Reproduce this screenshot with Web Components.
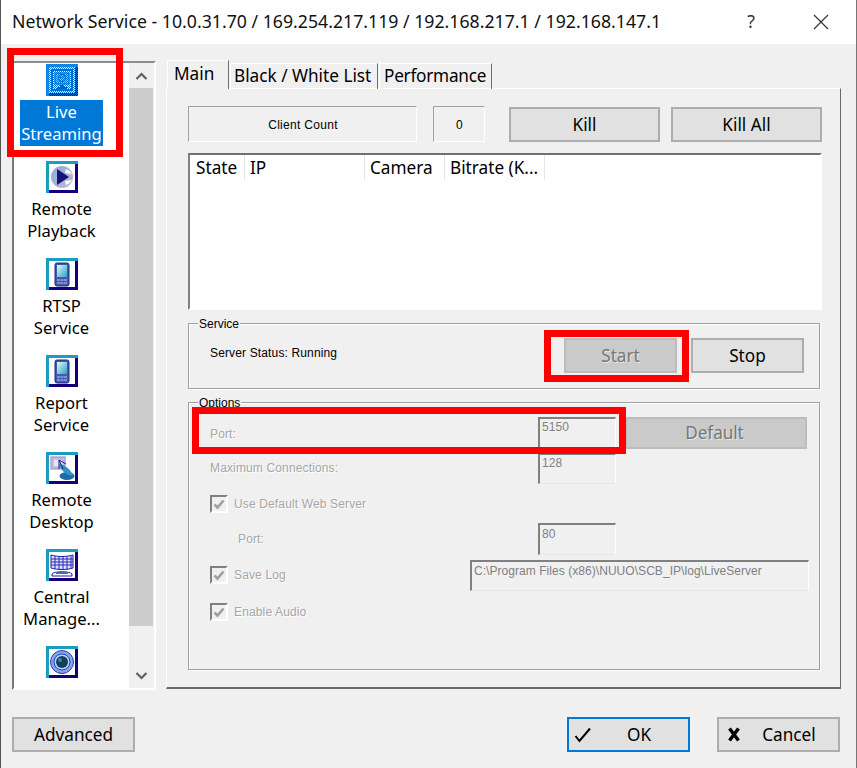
<!DOCTYPE html>
<html><head><meta charset="utf-8"><title>Network Service</title>
<style>html,body{margin:0;padding:0;background:#f0f0f0}</style></head>
<body>
<net-dialog></net-dialog>
<script>
const UI='"Noto Sans","Open Sans",sans-serif';
const SMALL='"Liberation Sans",Arial,sans-serif';
function def(name,css,html){
  customElements.define(name,class extends HTMLElement{
    constructor(){super();const r=this.attachShadow({mode:'open'});
      r.innerHTML='<style>'+css+'</style>'+(typeof html==='function'?html(this):html);}
  });
}
const ICONS={
 live:`<rect x="5" y="5" width="22" height="22" fill="#1c5cb0"/><rect x="7" y="7" width="18" height="18" fill="#fff"/><rect x="9" y="9" width="14" height="11" fill="#9db8ea" stroke="#123a9a"/><circle cx="16" cy="14" r="3.6" fill="none" stroke="#1c3fa8"/><circle cx="14.7" cy="13.2" r=".7" fill="#1c3fa8"/><circle cx="17.3" cy="13.2" r=".7" fill="#1c3fa8"/><path d="M14 21h4v2h3v2H11v-2h3z" fill="#123a9a"/>`,
 play:`<circle cx="16" cy="16" r="11" fill="url(#p)"/><path d="M11 8l12 8-12 8z" fill="#14147a"/><path d="M20 8a10 10 0 0 1 6 5l-7-1z" fill="#fff"/><path d="M20 24a10 10 0 0 0 6-5l-7 1z" fill="#fff"/>`,
 phone:`<rect x="9" y="5" width="14" height="23" rx="2" fill="#3a5fa8" stroke="#1d2a84"/><rect x="11" y="7" width="10" height="12" fill="url(#s)"/><g fill="#8f86d6"><rect x="11" y="21" width="3" height="2"/><rect x="14.5" y="21" width="3" height="2"/><rect x="18" y="21" width="3" height="2"/><rect x="11" y="24" width="3" height="2"/><rect x="14.5" y="24" width="3" height="2"/><rect x="18" y="24" width="3" height="2"/></g>`,
 desk:`<rect x="5" y="5" width="14" height="12" fill="#d4cdea" stroke="#8a80bc"/><rect x="7" y="7" width="10" height="8" fill="#e9e6f5" stroke="#a79fd0"/><ellipse cx="21" cy="24" rx="7.5" ry="4" fill="#1a6ca6"/><path d="M13 12c2 7 7 11 14 12-1-5-7-11-14-12z" fill="#2f93c8"/><path d="M13 8l4 9M13 8l7 4M13 8v9" stroke="#1a1a8a" fill="none"/>`,
 cms:`<path d="M5 6c7 2 15 2 22 0v13c-7 2-15 2-22 0z" fill="#dfe3f8" stroke="#1d1d96"/><path d="M5 10h22M5 13h22M5 16h22M9 7v13M13 7v14M17 7v14M21 7v14M25 7v13" stroke="#2a2ac0" stroke-width="1"/><path d="M6 25c2-3 18-3 20 0v2H6z" fill="#fff" stroke="#1d1d96"/><path d="M10 24h12" stroke="#4a6ac0" stroke-width="2"/>`,
 lens:`<circle cx="16" cy="16" r="11.5" fill="#7fa5e8" stroke="#2b3fb4"/><circle cx="16" cy="16" r="8" fill="#b9d4f6" stroke="#2b3fb4"/><circle cx="16" cy="16" r="6" fill="#123f5e"/><circle cx="14" cy="14" r="2" fill="#3b86a6"/>`
};
def('app-icon',`:host{display:block;width:32px;height:32px}svg{display:block}`,h=>{
 const k=h.getAttribute('kind'),sel=h.hasAttribute('selected');
 return `<svg width="32" height="32" viewBox="0 0 32 32"><defs>
 <linearGradient id="p" x1="0" y1="0" x2="1" y2="1"><stop offset="0" stop-color="#8fa9d8"/><stop offset="1" stop-color="#c4b8d8"/></linearGradient>
 <linearGradient id="s" x1="0" y1="0" x2="1" y2="1"><stop offset="0" stop-color="#e4f8fb"/><stop offset="1" stop-color="#2aa3c8"/></linearGradient>
 <pattern id="d" width="2" height="2" patternUnits="userSpaceOnUse"><rect width="1" height="1" fill="#0078d7"/><rect x="1" y="1" width="1" height="1" fill="#0078d7"/></pattern></defs>
 <rect width="32" height="32" fill="#14007a"/><path d="M0 0h32v3H3v29H0z" fill="#1c9cc0"/><rect x="3" y="3" width="26" height="26" fill="#fff"/>${ICONS[k]}
 ${sel?'<rect width="32" height="32" fill="url(#d)"/>':''}</svg>`});

def('nav-item',`:host{display:flex;flex-direction:column;align-items:center;height:97px;flex:none}
 .t{margin-top:4px;font:16.6px/22px ${UI};text-align:center;padding:1px 1px;color:#000;white-space:pre-line}
 :host([selected]) .t{background:#0078d7;color:#fff}`,
 h=>`<app-icon kind="${h.getAttribute('kind')}" ${h.hasAttribute('selected')?'selected':''}></app-icon><div class="t"><slot></slot></div>`);

def('nav-list',`:host{display:flex;width:140px;height:625px;border-style:solid;border-width:2px;border-color:#8c8c8c #fff #fff #7a7a7a;background:#fff;overflow:hidden;margin:0}
 .items{width:95px;padding:1px 20px 0 0;overflow:hidden;display:flex;flex-direction:column}
 .bar{width:25px;background:#f0f0f0;display:flex;flex-direction:column;align-items:stretch}
 .btn{height:25px;display:flex;align-items:center;justify-content:center;padding-right:1px}
 .thumb{height:538px;background:#cdcdcd;margin-right:1px}
 .rest{flex:1;display:flex;align-items:flex-end;justify-content:center;padding:0 1px 8px 0}
 svg{display:block}`,
 `<div class="items"><slot></slot></div><div class="bar"><div class="btn"><svg width="13" height="8"><path d="M1.5 7L6.5 2l5 5" fill="none" stroke="#606060" stroke-width="2.2"/></svg></div><div class="thumb"></div><div class="rest"><svg width="13" height="8"><path d="M1.5 1l5 5 5-5" fill="none" stroke="#606060" stroke-width="2.2"/></svg></div></div>`);

def('win-button',`:host{display:flex;align-items:center;justify-content:center;box-sizing:border-box;height:35px;background:#e1e1e1;border:2px solid #adadad;font:17.2px/1 ${UI};color:#000;flex:none;position:relative}
 :host([disabled]){background:#cacaca;border-color:#bcbcbc;color:#777;text-shadow:1px 1px 0 rgba(255,255,255,.55)}
 :host([primary]){border-color:#0078d7}
 :host([shift]){padding-left:21px}`,`<slot name="icon"></slot><slot></slot>`);

def('sunken-box',`:host{display:flex;align-items:center;justify-content:center;box-sizing:border-box;height:36px;padding:1px 0 0 1px;border:1px solid;border-color:#a0a0a0 #fff #fff #a0a0a0;font:12px/1 ${SMALL};letter-spacing:.3px;color:#000;flex:none}`,`<slot></slot>`);

def('report-list',`:host{display:block;box-sizing:border-box;width:634px;height:157px;background:#fff;border:2px solid;border-color:#707070 #fff #fff #808080;margin-top:11px}
 .h{display:flex;height:25px;font:17.2px/25px ${UI};color:#000}
 .c{box-sizing:border-box;border-right:1px solid #e5e5e5;padding-left:5px;white-space:nowrap;overflow:hidden}`,
 `<div class="h"><div class="c" style="width:55px;padding-left:6px">State</div><div class="c" style="width:120px">IP</div><div class="c" style="width:80px">Camera</div><div class="c" style="width:100px">Bitrate (K...</div></div>`);

def('group-box',`:host{display:block;box-sizing:border-box;width:632px;border:1px solid #a0a0a0;box-shadow:1px 1px 0 #fff, inset 1px 1px 0 #fff;position:relative;margin-top:13px}
 .l{position:absolute;left:9px;top:-7px;padding:0 1px;background:#f0f0f0;font:12px/14px ${SMALL};color:#000}`,
 h=>`<div class="l">${h.getAttribute('label')}</div><slot></slot>`);

def('small-label',`:host{display:block;font:12px/14px ${SMALL};letter-spacing:.14px;color:#000;white-space:nowrap}
 :host([disabled]){color:#a6a6a6;text-shadow:1px 1px 0 #fff}`,`<slot></slot>`);

def('field-box',`:host{display:block;box-sizing:border-box;height:31px;flex:none;border-style:solid;border-color:#808080 #fff #e6e6e6 #808080;border-width:2px 1px 1px 2px;font:12px/14px ${SMALL};letter-spacing:.05px;color:#808080;padding:1px 2px 0;white-space:nowrap;overflow:hidden}`,`<slot></slot>`);

def('check-row',`:host{display:flex;align-items:center;gap:6px;height:18px;flex:none}
 .b{box-sizing:border-box;width:18px;height:18px;border:2px solid;border-color:#808080 #fff #fff #808080;display:flex;align-items:center;justify-content:center}`,
 `<div class="b"><svg width="12" height="11" viewBox="0 0 12 11"><path d="M1.5 5.5l3 3 6-7" fill="none" stroke="#a0a0a0" stroke-width="2.6"/></svg></div><small-label disabled><slot></slot></small-label>`);

def('tab-strip',`:host{display:flex;align-items:flex-end;height:29px;margin-bottom:-1px;padding-left:1px;position:relative;z-index:1}`,`<slot></slot>`);
def('tab-item',`:host{display:block;box-sizing:border-box;height:26px;border:1px solid #fff;border-right:1px solid #707070;border-bottom:0;font:17.2px/23px ${UI};color:#000;padding:0 0 0 3px;margin-right:1px;flex:none;white-space:nowrap}
 :host([selected]){height:29px;padding-left:6px;background:#f0f0f0;line-height:25px}`,`<slot></slot>`);

def('red-frame',`:host{position:absolute;box-sizing:border-box;border:7px solid #f00;z-index:5;pointer-events:none}`,``);

def('title-bar',`:host{display:flex;align-items:center;height:44px;background:#fff;padding:0 27px 0 11px;font:17.72px/1 ${UI};color:#111}
 .t{flex:1;white-space:nowrap}.q{width:20px;text-align:center;margin-right:52px;color:#333}
 .x{width:16px;height:16px}`,
 `<div class="t"><slot></slot></div><div class="q">?</div><svg class="x" viewBox="0 0 16 16"><path d="M1 1l14 14M15 1L1 15" stroke="#333" stroke-width="1.2"/></svg>`);

def('net-dialog',`:host{display:block;position:relative;box-sizing:border-box;width:857px;height:768px;overflow:hidden;background:#f0f0f0;border-left:1px solid #555;border-right:1px solid #777}
 .main{display:flex;height:645px;padding-left:11px}
 .nav{padding-top:17px;margin-right:10px}
 .tabs{padding-top:16px;width:675px}
 .page{box-sizing:border-box;height:601px;border:1px solid #fff;border-right-color:#696969;border-bottom:2px solid #696969;padding:17px 0 0 21px}
 .r1{display:flex;align-items:flex-end}
 .svc{height:64px;display:flex;box-sizing:border-box;padding:14px 0 0 21px}
 .svc small-label{flex:1;margin-top:8px}
 .opt{height:266px;box-sizing:border-box;padding:14px 0 0 21px;display:flex;flex-direction:column}
 .row{display:flex;align-items:flex-start}
 .foot{display:flex;padding:28px 16px 0 11px}
 .sp{flex:1}
 svg{display:block}`,
 `<title-bar>Network Service - 10.0.31.70 / 169.254.217.119 / 192.168.217.1 / 192.168.147.1</title-bar>
 <div class="main">
  <div class="nav"><nav-list>
   <nav-item kind="live" selected>Live
Streaming</nav-item>
   <nav-item kind="play">Remote
Playback</nav-item>
   <nav-item kind="phone">RTSP
Service</nav-item>
   <nav-item kind="phone">Report
Service</nav-item>
   <nav-item kind="desk">Remote
Desktop</nav-item>
   <nav-item kind="cms">Central
Manage...</nav-item>
   <nav-item kind="lens">Device</nav-item>
  </nav-list></div>
  <div class="tabs">
   <tab-strip><tab-item selected style="width:62px">Main</tab-item><tab-item style="width:148px">Black / White List</tab-item><tab-item style="width:113px;padding-left:4px;letter-spacing:-.25px">Performance</tab-item></tab-strip>
   <div class="page">
    <div class="r1">
     <sunken-box style="width:229px">Client Count</sunken-box>
     <sunken-box style="width:52px;margin-left:16px">0</sunken-box>
     <win-button style="width:151px;margin-left:24px">Kill</win-button>
     <win-button style="width:151px;margin-left:11px">Kill All</win-button>
    </div>
    <report-list></report-list>
    <group-box label="Service">
     <div class="svc"><small-label>Server Status: Running</small-label>
      <win-button disabled style="width:113px">Start</win-button>
      <win-button style="width:113px;margin-left:14px;margin-right:15px">Stop</win-button></div>
    </group-box>
    <group-box label="Options">
     <div class="opt">
      <div class="row"><small-label disabled style="width:328px;margin-top:10px">Port:</small-label><field-box style="width:78px">5150</field-box><win-button disabled style="width:182px;height:32px;margin-left:9px;padding-right:3px;letter-spacing:-.1px">Default</win-button></div>
      <div class="row" style="margin-top:4px"><small-label disabled style="width:328px;margin-top:8px">Maximum Connections:</small-label><field-box style="width:78px">128</field-box></div>
      <check-row style="margin-top:11px">Use Default Web Server</check-row>
      <div class="row" style="margin-top:10px"><small-label disabled style="width:300px;margin-left:28px;margin-top:9px">Port:</small-label><field-box style="width:78px;height:32px;padding-top:2px">80</field-box></div>
      <div class="row" style="margin-top:5px"><check-row style="width:260px;margin-top:6px">Save Log</check-row><field-box style="width:339px;padding-top:2px">C:\\Program Files (x86)\\NUUO\\SCB_IP\\log\\LiveServer</field-box></div>
      <check-row style="margin-top:12px">Enable Audio</check-row>
     </div>
    </group-box>
   </div>
  </div>
 </div>
 <div class="foot">
  <win-button style="width:123px">Advanced</win-button><div class="sp"></div>
  <win-button primary shift style="width:123px"><svg slot="icon" width="18" height="16" viewBox="0 0 18 16" style="position:absolute;left:5px;top:8px"><path d="M1.5 9l4 5L16 1.5" fill="none" stroke="#000" stroke-width="2"/></svg>OK</win-button>
  <win-button shift style="width:123px;margin-left:27px"><svg slot="icon" width="14" height="15" viewBox="0 0 14 15" style="position:absolute;left:8px;top:8px"><path d="M2.5 1.5l9 12M11.5 1.5l-9 12" fill="none" stroke="#000" stroke-width="3.4"/></svg>Cancel</win-button>
 </div>
 <red-frame style="left:6px;top:48px;width:116px;height:109px"></red-frame>
 <red-frame style="left:543px;top:330px;width:145px;height:52px"></red-frame>
 <red-frame style="left:191px;top:407px;width:434px;height:47px"></red-frame>`);
</script>
</body></html>
